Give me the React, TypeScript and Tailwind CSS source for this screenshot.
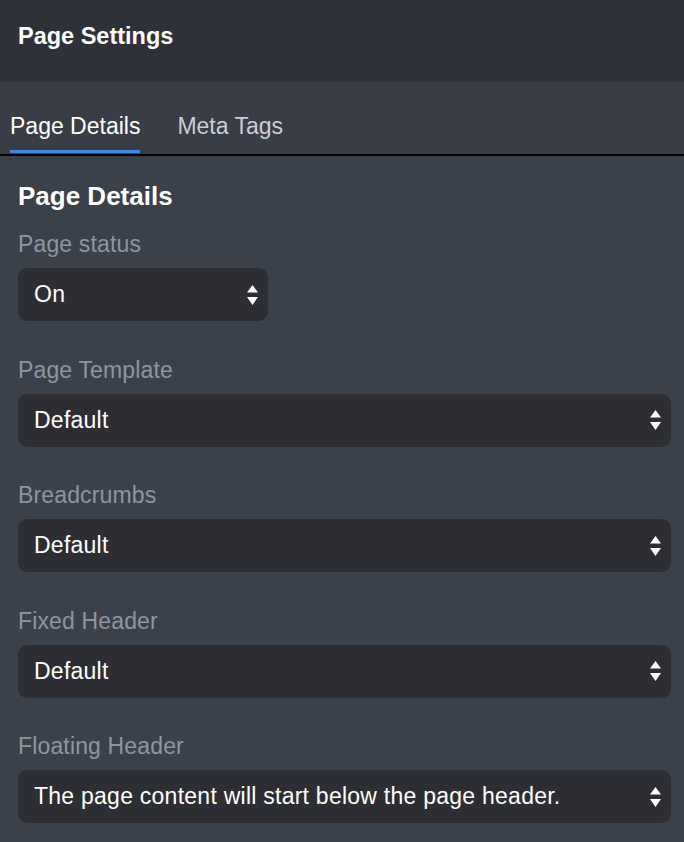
import React from "react";

function Arrows() {
  return (
    <svg width="11" height="20" viewBox="0 0 11 20" className="shrink-0">
      <polygon points="5.5,0 11,7.5 0,7.5" fill="#ffffff" />
      <polygon points="0,12 11,12 5.5,20" fill="#ffffff" />
    </svg>
  );
}

function Field({ label, value, narrow }: { label: string; value: string; narrow?: boolean }) {
  return (
    <div className="flex flex-col">
      <div className="text-[23px] leading-none tracking-[0.15px] text-[#8e95a1] mb-[12px]">{label}</div>
      <div
        className={
          "h-[53px] rounded-[9px] bg-[#2d2e33] flex items-center justify-between pl-[16px] pr-[10px] " +
          (narrow ? "w-[250px]" : "w-full")
        }
      >
        <span className="text-[23px] leading-none tracking-[0.25px] text-white">{value}</span>
        <Arrows />
      </div>
    </div>
  );
}

export default function App() {
  return (
    <div
      className="w-[684px] h-[842px] bg-[#3b414b] flex flex-col overflow-hidden"
      style={{ fontFamily: '"Liberation Sans", Arial, sans-serif' }}
    >
      <div className="h-[82px] bg-[#2e3138] pt-[25px] px-[18px] shrink-0">
        <div className="text-[23.5px] leading-none font-bold text-white">Page Settings</div>
      </div>
      <div className="bg-[#383d46] pt-[33px] pb-px border-b-2 border-black shrink-0">
        <div className="flex gap-[37px] pl-[10px]">
          <div className="text-[23px] leading-none text-white pb-[12px] border-b-[3px] border-[#3b8beb]">
            Page Details
          </div>
          <div className="text-[23px] leading-none text-[#c9ced6] pb-[12px]">Meta Tags</div>
        </div>
      </div>
      <div className="pt-[27px] pl-[18px] pr-[13px] flex flex-col">
        <div className="text-[26px] leading-none font-bold text-white mb-[24px]">Page Details</div>
        <div className="flex flex-col gap-[37.5px]">
          <Field label="Page status" value="On" narrow />
          <Field label="Page Template" value="Default" />
          <Field label="Breadcrumbs" value="Default" />
          <Field label="Fixed Header" value="Default" />
          <Field label="Floating Header" value="The page content will start below the page header." />
        </div>
      </div>
    </div>
  );
}
